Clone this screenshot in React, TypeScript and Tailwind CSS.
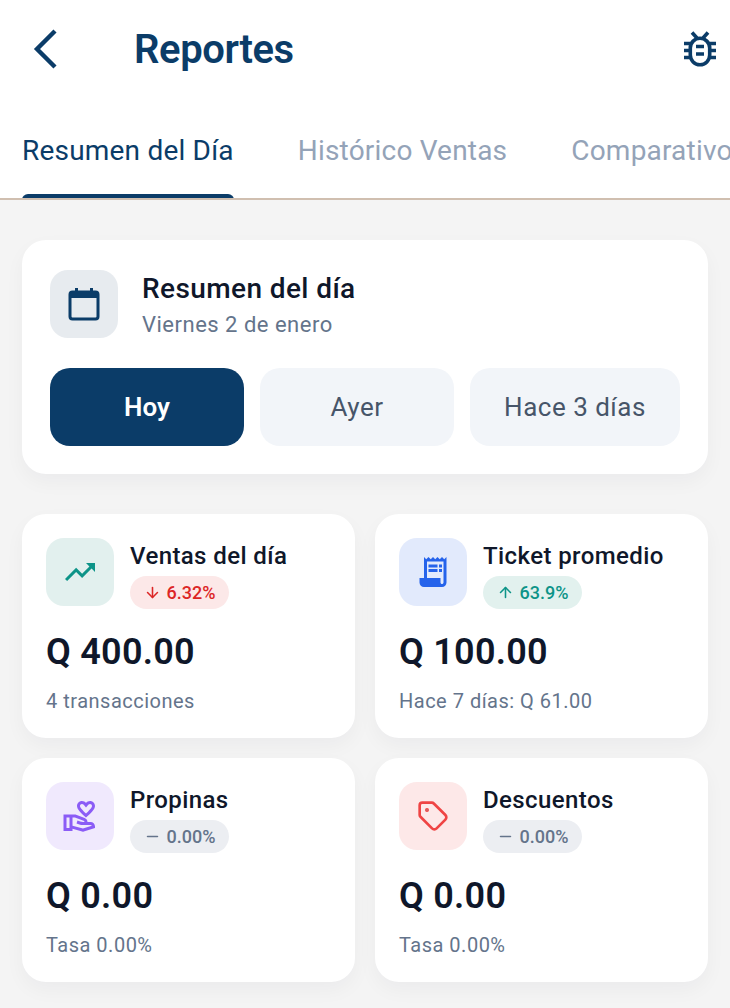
import { ArrowDown, ArrowUp, Minus, Tag, type LucideIcon } from "lucide-react";
import {
  MdOutlineVolunteerActivism,
  MdReceiptLong,
  MdTrendingUp,
} from "react-icons/md";
import type { ReactNode } from "react";

const font = { fontFamily: "Roboto, sans-serif" };

function BugIcon() {
  return (
    <svg width="32" height="36" viewBox="0 0 32 36" fill="none" stroke="#0b3c68" strokeWidth="3.6">
      <rect x="6.3" y="7.3" width="19.4" height="26.5" rx="9.7" />
      <path d="M8 1.5l5 5.5M24 1.5l-5 5.5M0 12.5h6M26 12.5h6M0 19.5h6M26 19.5h6M0 26.5h6M26 26.5h6M12 15.5h8M12 23h8" />
    </svg>
  );
}

function CalendarIcon() {
  return (
    <svg width="32" height="34" viewBox="0 0 32 34" fill="none">
      <rect x="2" y="5" width="28" height="27" rx="2.5" stroke="#0b3c68" strokeWidth="3" />
      <path d="M2 6.5a2.5 2.5 0 0 1 2.5-2.5h23a2.5 2.5 0 0 1 2.5 2.5V11H2z" fill="#0b3c68" />
      <path d="M8.5 1v5M23.5 1v5" stroke="#0b3c68" strokeWidth="3" />
    </svg>
  );
}

function Badge({
  icon: Icon,
  value,
  tone,
}: {
  icon: LucideIcon;
  value: string;
  tone: string;
}) {
  return (
    <div className={`flex h-[33px] w-[99px] items-center justify-center gap-[6px] rounded-full text-[18px] font-medium ${tone}`}>
      <Icon size={17} strokeWidth={2.2} />
      <span>{value}</span>
    </div>
  );
}

function StatCard({
  icon,
  iconBg,
  title,
  badge,
  value,
  note,
}: {
  icon: ReactNode;
  iconBg: string;
  title: string;
  badge: ReactNode;
  value: string;
  note: string;
}) {
  return (
    <div className="h-[224px] rounded-[24px] bg-white p-6 shadow-[0_8px_20px_rgba(15,23,42,0.04)]">
      <div className="flex gap-4">
        <div className={`flex h-[68px] w-[68px] items-center justify-center rounded-[18px] ${iconBg}`}>
          {icon}
        </div>
        <div>
          <div className="mt-[2px] text-[24px] leading-[32px] font-medium tracking-[0.4px] text-[#0f172a]">{title}</div>
          <div className="mt-[4px]">{badge}</div>
        </div>
      </div>
      <div className="mt-[21px] text-[36px] leading-[44px] font-semibold tracking-[0.25px] text-[#0f172a]">{value}</div>
      <div className="mt-[13px] text-[20px] leading-[28px] tracking-[0.5px] text-[#64748b]">{note}</div>
    </div>
  );
}

export default function App() {
  return (
    <div className="h-[1008px] overflow-hidden bg-[#f4f4f4]" style={font}>
      <header className="bg-white">
        <div className="flex h-[98px] items-center justify-between pr-[14px] pl-[30px]">
          <div className="flex items-center">
            <svg width="30" height="42" viewBox="0 0 30 42" fill="none" stroke="#0b3c68" strokeWidth="4.4">
              <path d="M25 3L7 21l18 18" />
            </svg>
            <h1 className="mt-[2px] ml-[74px] text-[40px] font-semibold tracking-[-0.4px] text-[#0b3c68]">Reportes</h1>
          </div>
          <BugIcon />
        </div>
        <div className="relative flex h-[102px] overflow-hidden border-b-2 border-[#d0bfb0] pl-[22px] text-[28px] tracking-[0.2px] whitespace-nowrap">
          <div className="relative w-[212px] pt-[32px] text-[#0b3c68]">
            Resumen del Día
            <div className="absolute right-0 bottom-[-2px] left-0 h-[6px] rounded-t-[6px] bg-[#0b3c68]" />
          </div>
          <div className="ml-[64px] pt-[32px] text-[#94a3b8]">Histórico Ventas</div>
          <div className="ml-[64px] pt-[32px] text-[#94a3b8]">Comparativo</div>
        </div>
      </header>

      <main className="px-[22px] pt-[40px]">
        <section className="h-[234px] rounded-[24px] bg-white p-[28px] pt-[30px] shadow-[0_8px_20px_rgba(15,23,42,0.04)]">
          <div className="flex h-[68px] gap-6">
            <div className="flex h-[68px] w-[68px] items-center justify-center rounded-[18px] bg-[#e7ebef]">
              <CalendarIcon />
            </div>
            <div>
              <div className="mt-[1px] text-[28px] leading-[36px] font-medium tracking-[0.4px] text-[#0f172a]">Resumen del día</div>
              <div className="mt-[4px] text-[22px] leading-[28px] tracking-[0.5px] text-[#64748b]">Viernes 2 de enero</div>
            </div>
          </div>
          <div className="mt-[30px] flex gap-4">
            <div className="flex h-[78px] w-[194px] items-center justify-center rounded-[20px] bg-[#0b3c68] text-[26px] font-semibold text-white">Hoy</div>
            <div className="flex h-[78px] w-[194px] items-center justify-center rounded-[20px] bg-[#f2f5f9] text-[26px] tracking-[0.5px] text-[#475569]">Ayer</div>
            <div className="flex h-[78px] w-[210px] items-center justify-center rounded-[20px] bg-[#f2f5f9] text-[26px] tracking-[0.5px] text-[#475569]">Hace 3 días</div>
          </div>
        </section>

        <section className="mt-[40px] grid grid-cols-2 gap-5">
          <StatCard
            icon={<MdTrendingUp size={36} color="#0d9488" />}
            iconBg="bg-[#e2f0ee]"
            title="Ventas del día"
            badge={<Badge icon={ArrowDown} value="6.32%" tone="bg-[#fce8e8] text-[#dc2626]" />}
            value="Q 400.00"
            note="4 transacciones"
          />
          <StatCard
            icon={<MdReceiptLong size={36} color="#2563eb" />}
            iconBg="bg-[#e2eafc]"
            title="Ticket promedio"
            badge={<Badge icon={ArrowUp} value="63.9%" tone="bg-[#e2f1ee] text-[#0d9488]" />}
            value="Q 100.00"
            note="Hace 7 días: Q 61.00"
          />
          <StatCard
            icon={<MdOutlineVolunteerActivism size={36} color="#8b5cf6" />}
            iconBg="bg-[#f0e9fd]"
            title="Propinas"
            badge={<Badge icon={Minus} value="0.00%" tone="bg-[#eceef2] text-[#64748b]" />}
            value="Q 0.00"
            note="Tasa 0.00%"
          />
          <StatCard
            icon={<Tag size={32} color="#ef4444" strokeWidth={2} />}
            iconBg="bg-[#fde8e8]"
            title="Descuentos"
            badge={<Badge icon={Minus} value="0.00%" tone="bg-[#eceef2] text-[#64748b]" />}
            value="Q 0.00"
            note="Tasa 0.00%"
          />
        </section>
      </main>
    </div>
  );
}
